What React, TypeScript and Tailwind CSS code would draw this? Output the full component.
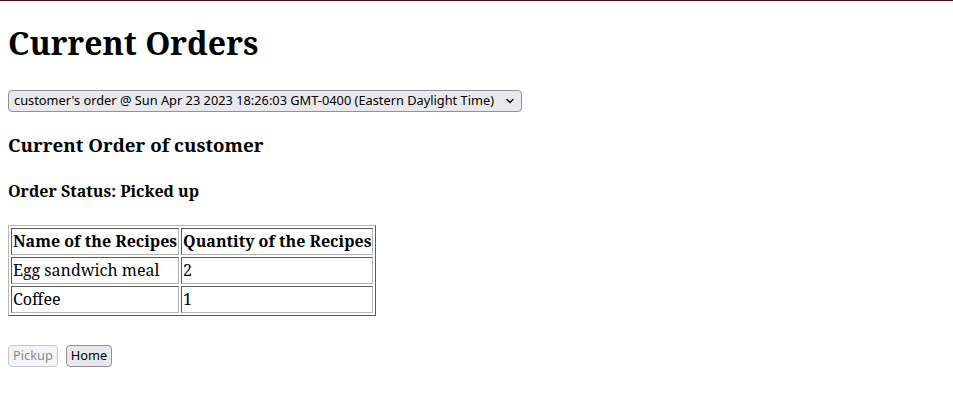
import { ChevronDown } from "lucide-react";

const rows = [
  { name: "Egg sandwich meal", qty: 2 },
  { name: "Coffee", qty: 1 },
];

export default function App() {
  const cell =
    "px-px py-px text-left leading-[23px] border border-t-[#5a5a5a] border-l-[#5a5a5a] border-b-[#b4b4b4] border-r-[#b4b4b4]";

  return (
    <div className="min-h-screen bg-white text-black font-['Noto_Serif','Droid_Serif',serif]">
      <div className="h-px bg-[#4d0a14]" />
      <div className="px-2">
        <h1 className="mt-[20px] text-[32px] font-bold leading-[normal]">Current Orders</h1>

        <div className="relative mt-[26px] inline-flex">
          <select
            className="h-[22px] w-[514px] appearance-none rounded-[4px] border border-[#8f8f9d] bg-[#e9e9ed] pl-[5px] pr-6 font-['Noto_Sans',sans-serif] text-[12.8px] text-black"
            defaultValue="0"
          >
            <option value="0">
              customer's order @ Sun Apr 23 2023 18:26:03 GMT-0400 (Eastern Daylight Time)
            </option>
          </select>
          <ChevronDown
            className="pointer-events-none absolute right-[6px] top-[5px] h-[12px] w-[12px]"
            strokeWidth={2.5}
          />
        </div>

        <h3 className="mt-[20px] text-[18.72px] font-bold leading-[normal]">Current Order of customer</h3>
        <h4 className="mt-[23px] text-base font-bold leading-[normal]">Order Status: Picked up</h4>

        <table className="mt-[23px] border-separate border-spacing-[2px] border border-t-[#b4b4b4] border-l-[#b4b4b4] border-b-[#5a5a5a] border-r-[#5a5a5a] text-base">
          <thead>
            <tr>
              <th className={cell + " font-bold"}>Name of the Recipes</th>
              <th className={cell + " font-bold"}>Quantity of the Recipes</th>
            </tr>
          </thead>
          <tbody>
            {rows.map((r) => (
              <tr key={r.name}>
                <td className={cell}>{r.name}</td>
                <td className={cell}>{r.qty}</td>
              </tr>
            ))}
          </tbody>
        </table>

        <div className="mt-[29px] flex gap-2 font-['Noto_Sans',sans-serif] text-[12.8px]">
          <button
            disabled
            className="h-[22px] rounded-[4px] border border-[#c8c8cf] bg-[#f4f4f6] px-[4px] text-[#8a8a8a]"
          >
            Pickup
          </button>
          <button className="h-[22px] rounded-[4px] border border-[#8f8f9d] bg-[#e9e9ed] px-[4px] text-black">
            Home
          </button>
        </div>
      </div>
    </div>
  );
}
